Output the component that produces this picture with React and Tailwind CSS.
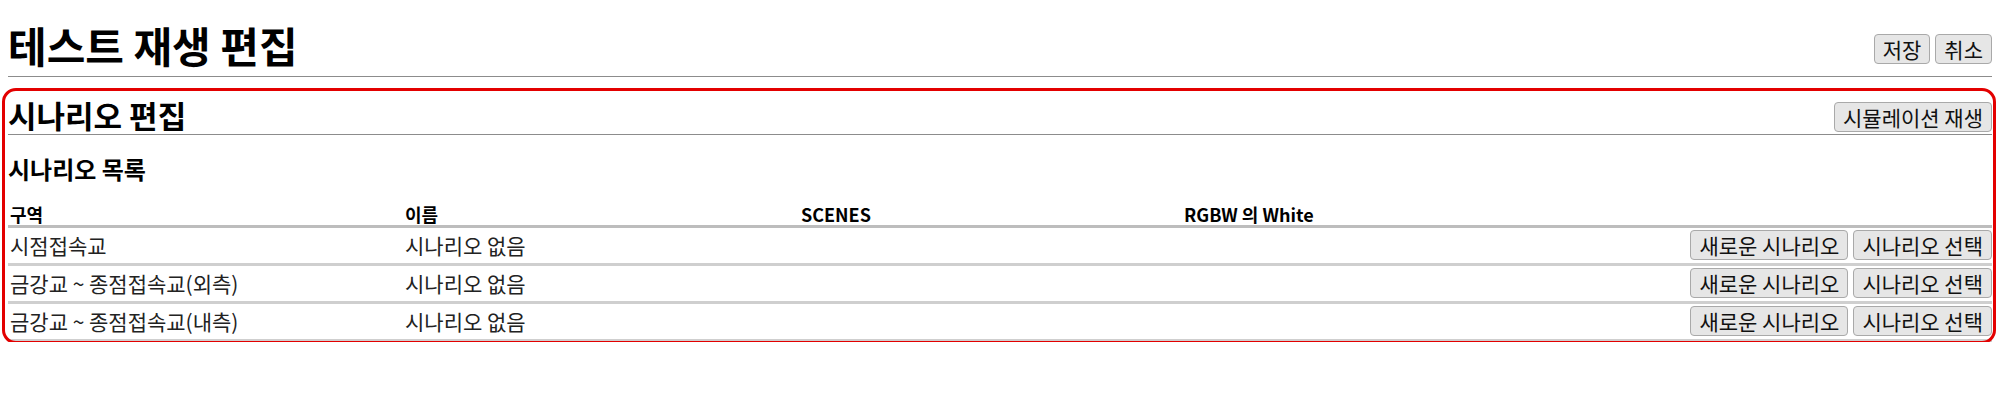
const zones = [
  { name: '시점접속교', scenario: '시나리오 없음' },
  { name: '금강교 ~ 종점접속교(외측)', scenario: '시나리오 없음' },
  { name: '금강교 ~ 종점접속교(내측)', scenario: '시나리오 없음' },
]

function Btn({ children }) {
  return (
    <button className="h-[30px] px-[8px] bg-[#e6e6e6] border border-[#a9a9a9] rounded-[4px] text-[21px] leading-[28px] text-[#111]">
      {children}
    </button>
  )
}

export default function App() {
  return (
    <div className="px-[8px] bg-white text-black font-['Noto_Sans_CJK_KR','Noto_Sans',sans-serif]">
      <header className="flex justify-between items-end h-[76px] pb-[12px]">
        <h1 className="text-[42px] font-bold leading-[50px] mb-[-6px]">테스트 재생 편집</h1>
        <div className="flex gap-[5px]">
          <Btn>저장</Btn>
          <Btn>취소</Btn>
        </div>
      </header>
      <hr className="border-t border-[#8c8c8c]" />

      <section className="relative">
        <div className="absolute top-[11px] left-[-6px] right-[-4px] h-[256px] border-[3px] border-[#e30000] rounded-[14px] pointer-events-none z-10" />

        <div className="flex justify-between items-end h-[57px] pb-[2px]">
          <h2 className="text-[31px] font-bold leading-[36px] mb-[-1px]">시나리오 편집</h2>
          <Btn>시뮬레이션 재생</Btn>
        </div>
        <hr className="border-t border-[#8c8c8c]" />

        <h3 className="mt-[19px] text-[24px] font-bold leading-[30px]">시나리오 목록</h3>

        <table className="w-full table-fixed border-collapse">
          <colgroup>
            <col className="w-[395px]" />
            <col className="w-[396px]" />
            <col className="w-[383px]" />
            <col className="w-[300px]" />
            <col />
          </colgroup>
          <thead>
            <tr className="border-b-[3px] border-[#bdbdbd]">
              <th className="h-[42px] align-bottom pb-[1px] pl-[2px] text-left text-[18px] font-bold leading-[20px]">구역</th>
              <th className="h-[42px] align-bottom pb-[1px] pl-[2px] text-left text-[18px] font-bold leading-[20px]">이름</th>
              <th className="h-[42px] align-bottom pb-[1px] pl-[2px] text-left text-[18px] font-bold leading-[20px]">SCENES</th>
              <th className="h-[42px] align-bottom pb-[1px] pl-[2px] text-left text-[18px] font-bold leading-[20px]">RGBW 의 White</th>
              <th className="h-[42px]" />
            </tr>
          </thead>
          <tbody>
            {zones.map((z, i) => (
              <tr key={i} className="border-b-[3px] border-[#cfcfcf]">
                <td className="h-[38px] pl-[2px] text-[21px] text-[#222] leading-[26px]">{z.name}</td>
                <td className="h-[38px] pl-[2px] text-[21px] text-[#222] leading-[26px]">{z.scenario}</td>
                <td />
                <td />
                <td className="h-[38px]">
                  <div className="flex justify-end gap-[5px]">
                    <Btn>새로운 시나리오</Btn>
                    <Btn>시나리오 선택</Btn>
                  </div>
                </td>
              </tr>
            ))}
          </tbody>
        </table>
      </section>
    </div>
  )
}
